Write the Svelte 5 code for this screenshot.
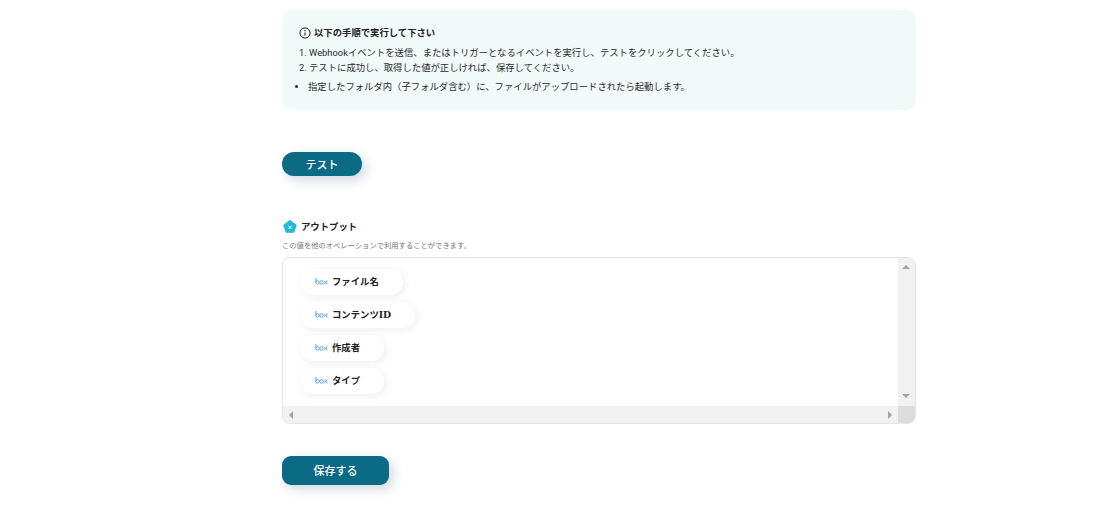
<script lang="ts">
  const outputs = ["ファイル名", "コンテンツID", "作成者", "タイプ"];
</script>

{#snippet boxLogo()}
  <svg class="box-logo" viewBox="0 0 13 7" aria-hidden="true">
    <g fill="none" stroke="#5ba3e0" stroke-width="1">
      <path d="M.9 0v4.4" />
      <circle cx="2.5" cy="4.4" r="1.7" />
      <circle cx="6.5" cy="4.4" r="1.7" />
      <path d="M9 2.5l3.6 3.8M12.6 2.5L9 6.3" />
    </g>
  </svg>
{/snippet}

<main class="page">
  <section class="notice">
    <h2 class="notice-title">
      <svg class="info" viewBox="0 0 12 12" aria-hidden="true">
        <circle cx="6" cy="6" r="5.1" fill="none" stroke="#222" stroke-width="1" />
        <circle cx="6" cy="3.7" r="0.7" fill="#222" />
        <path d="M6 5.4v3.2" stroke="#222" stroke-width="1.1" />
      </svg>
      以下の手順で実行して下さい
    </h2>
    <ol>
      <li>Webhookイベントを送信、またはトリガーとなるイベントを実行し、テストをクリックしてください。</li>
      <li>テストに成功し、取得した値が正しければ、保存してください。</li>
    </ol>
    <ul>
      <li>指定したフォルダ内（子フォルダ含む）に、ファイルがアップロードされたら起動します。</li>
    </ul>
  </section>

  <button class="btn test">テスト</button>

  <section class="output">
    <h3>
      <svg class="pentagon" viewBox="0 0 16 16" aria-hidden="true">
        <path d="M8 2.4l6.2 4.6-2.4 7.3H4.2L1.8 7z" fill="#22b8e0" stroke="#22b8e0" stroke-width="1" stroke-linejoin="round" />
        <path d="M6.5 7.6l3 3.2M9.5 7.6l-3 3.2" stroke="#fff" stroke-width="1" />
      </svg>
      アウトプット
    </h3>
    <p class="hint">この値を他のオペレーションで利用することができます。</p>

    <div class="frame">
      <div class="list">
        {#each outputs as label}
          <div class="chip">
            {@render boxLogo()}
            <span>{label}</span>
          </div>
        {/each}
      </div>
      <div class="bar vertical">
        <i class="arrow up"></i>
        <i class="arrow down"></i>
      </div>
      <div class="bar horizontal">
        <i class="arrow left"></i>
        <i class="arrow right"></i>
      </div>
      <div class="corner"></div>
    </div>
  </section>

  <button class="btn save">保存する</button>
</main>

<style>
  :global(body) {
    margin: 0;
    background: #fff;
    font-family: Roboto, "Noto Sans CJK JP", sans-serif;
    color: #222;
  }

  .page {
    width: 634px;
    margin-left: 282px;
    padding-top: 10px;
    height: 510px;
    overflow: hidden;
  }

  .notice {
    height: 100px;
    box-sizing: border-box;
    padding: 16px 16px 0;
    background: #f1f9f9;
    border-radius: 10px;
    font-size: 9.36px;
    line-height: 15px;
    color: #2a2a2a;
  }

  .notice-title {
    display: flex;
    align-items: center;
    gap: 3px;
    margin: 0 0 5px 1px;
    font-size: 9.36px;
    line-height: 14px;
    font-weight: 700;
    color: #222;
  }

  .info {
    width: 12px;
    height: 12px;
  }

  ol, ul {
    margin: 0;
    padding: 0;
  }

  ol {
    padding-left: 11px;
  }

  ul {
    margin-top: 4px;
    padding-left: 10px;
  }

  .btn {
    display: block;
    border: 0;
    padding: 0 0 1px;
    background: #0b6a84;
    color: #fff;
    font: 500 11px Roboto, "Noto Sans CJK JP", sans-serif;
    box-shadow: 4px 4px 12px rgba(30, 60, 90, 0.2);
  }

  .test {
    width: 80px;
    height: 24px;
    margin-top: 42px;
    border-radius: 12px;
  }

  .output {
    margin-top: 42px;
  }

  h3 {
    display: flex;
    align-items: center;
    gap: 3px;
    margin: 0;
    height: 16px;
    font-size: 9.36px;
    font-weight: 700;
    color: #222;
  }

  .pentagon {
    width: 16px;
    height: 16px;
  }

  .hint {
    margin: 7px 0 0;
    font-size: 7.3px;
    line-height: 10px;
    color: #777;
  }

  .frame {
    display: grid;
    grid-template-columns: 1fr 17px;
    grid-template-rows: 148px 17px;
    margin-top: 6px;
    border: 1px solid #e4e4e4;
    border-radius: 8px;
    overflow: hidden;
  }

  .list {
    display: flex;
    flex-direction: column;
    align-items: flex-start;
    gap: 7px;
    padding: 11px 0 0 17px;
  }

  .chip {
    display: flex;
    align-items: center;
    gap: 4px;
    height: 26px;
    box-sizing: border-box;
    padding: 0 24px 2px 15px;
    border-radius: 13px;
    background: #fff;
    box-shadow: 2px 2px 8px rgba(0, 0, 0, 0.07);
    font: 700 9.36px "DejaVu Serif", "Noto Sans CJK JP", serif;
    color: #222;
  }

  .box-logo {
    width: 13px;
    height: 7px;
  }

  .bar {
    position: relative;
    background: #f1f1f1;
  }

  .corner {
    background: #dcdcdc;
  }

  .arrow {
    position: absolute;
    width: 0;
    height: 0;
    border: 4px solid transparent;
  }

  .up {
    top: 3px;
    left: 4px;
    border-bottom-color: #a3a3a3;
  }

  .down {
    bottom: 4px;
    left: 4px;
    border-top-color: #a3a3a3;
  }

  .left {
    left: 2px;
    top: 5px;
    border-right-color: #a3a3a3;
  }

  .right {
    right: 2px;
    top: 5px;
    border-left-color: #a3a3a3;
  }

  .save {
    width: 107px;
    height: 29px;
    margin-top: 32px;
    border-radius: 9px;
  }
</style>
